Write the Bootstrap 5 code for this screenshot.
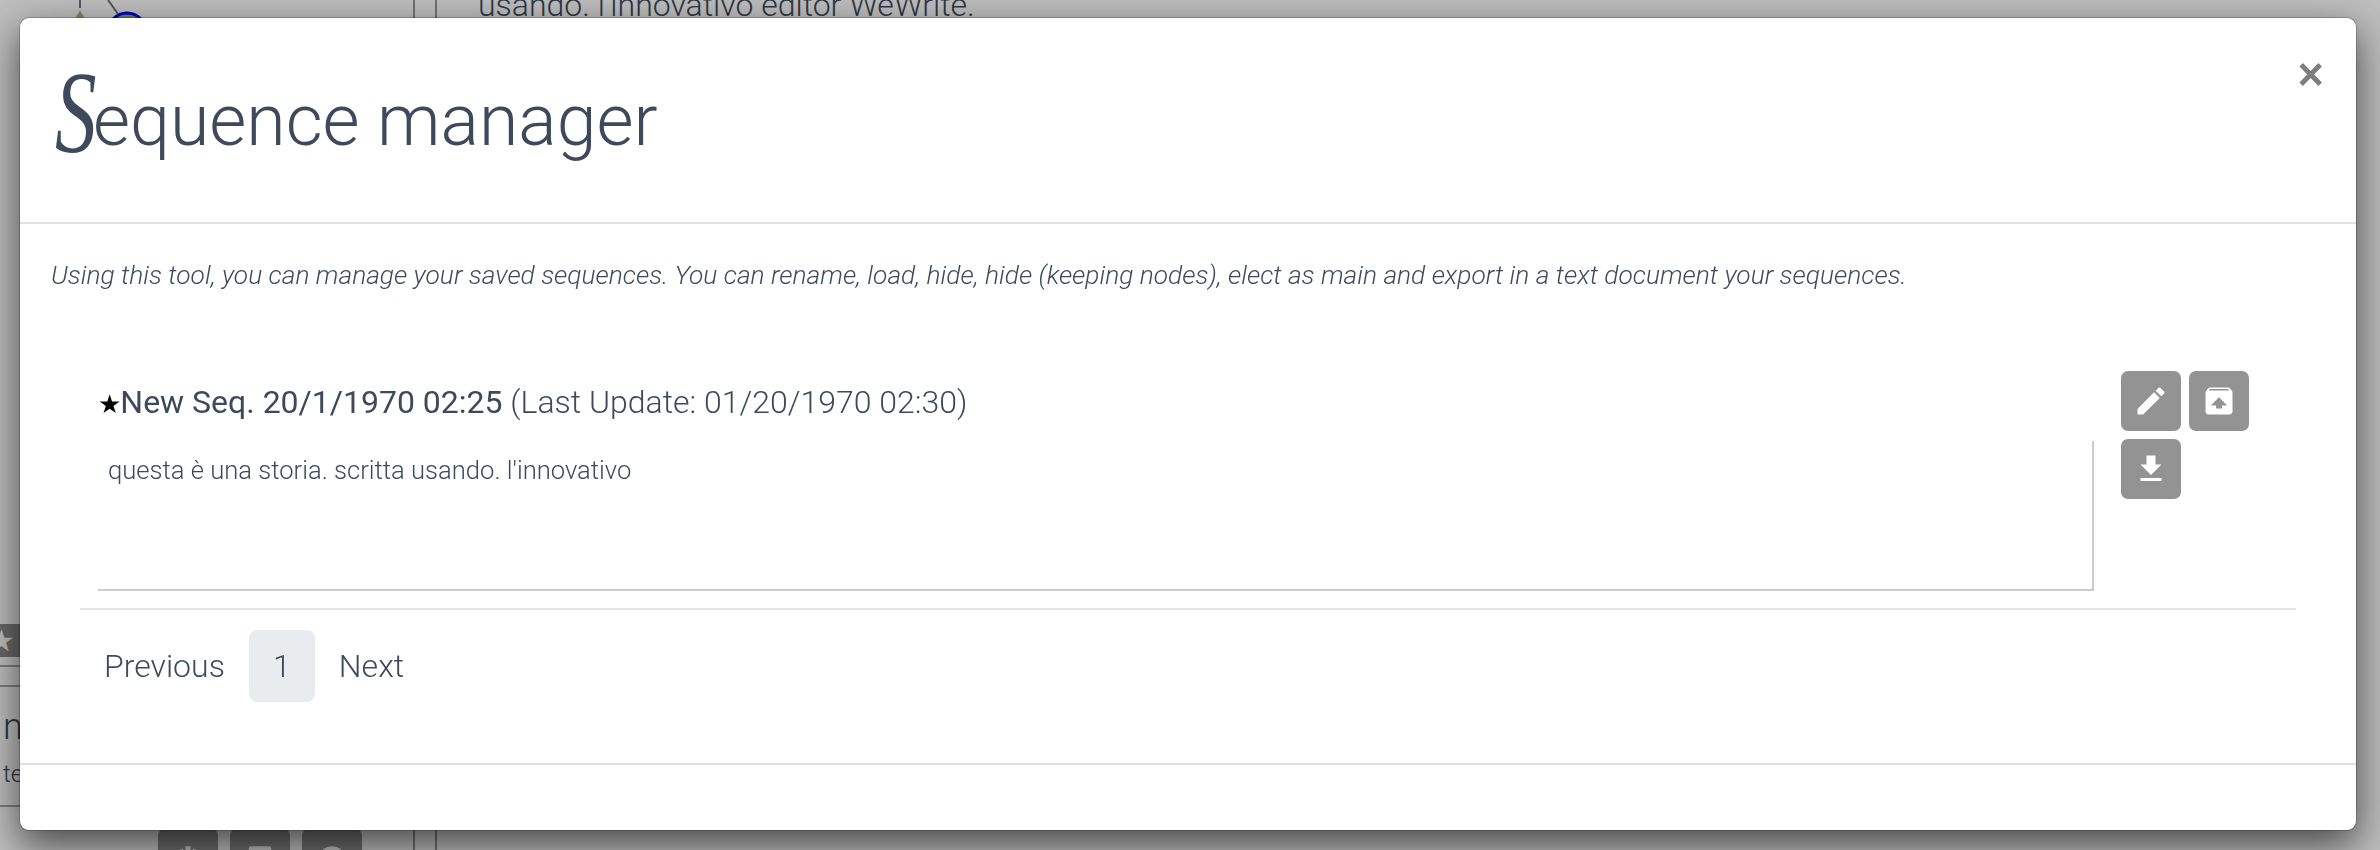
<!DOCTYPE html>
<html lang="en">
<head>
    <meta charset="UTF-8">
    <meta name="viewport" content="width=device-width, initial-scale=1.0">
    <title>Sequence manager</title>
    <link href="https://cdn.jsdelivr.net/npm/bootstrap@5.3.0/dist/css/bootstrap.min.css" rel="stylesheet">
    <style>
        html, body { height: 100%; overflow: hidden; }
        body { font-family: Roboto, "Liberation Sans", sans-serif; font-weight: 300; color: #3e4a5c; background: #fff; }

        /* page behind the modal */
        .back-page { display: grid; grid-template-columns: 415px 22px 1fr; height: 850px; overflow: hidden; }
        .back-side { display: flex; flex-direction: column; border-right: 2px solid #999; }
        .back-gap { border-right: 2px solid #999; }
        .back-nodes { display: block; height: 624px; flex: none; }
        .back-star { width: 20px; height: 33px; background: #8c8c8c; color: #fff; font-size: 30px; line-height: 33px; text-indent: -12px; overflow: hidden; }
        .back-rule { border-bottom: 2px solid #aaa; }
        .back-word { overflow: hidden; white-space: nowrap; padding-left: 3px; }
        .back-btns { display: flex; gap: 12px; padding-left: 158px; height: 60px; flex: none; }
        .back-btn { width: 60px; height: 60px; background: #939393; border-radius: 6px; display: flex; justify-content: center; padding-top: 16px; }
        .back-btn svg { width: 30px; height: 30px; fill: #fff; }
        .back-text { font-size: 32px; line-height: 32px; margin-top: -11px; padding-left: 41px; white-space: nowrap; height: 30px; }

        .modal-backdrop.show { opacity: .26; }
        .seq-dialog { max-width: none; width: 2338px; margin: 17px 0 0 19px; }
        .seq-content { height: 814px; border-radius: 10px; border: 1px solid rgba(0,0,0,.2); box-shadow: 0 14px 38px rgba(0,0,0,.62); }
        .seq-header { height: 206px; padding: 0 32px 0 35px; align-items: flex-start; border-bottom: 2px solid #dee2e6; }
        .seq-title { font-size: 71.6px; line-height: 104px; margin-top: 40px; font-weight: 300; color: #3e4a5c; white-space: nowrap; }
        .seq-cap { font-family: "Liberation Serif", serif; font-style: italic; font-size: 104px; line-height: 1; display: inline-block; margin-right: -14px; transform-origin: left bottom; transform: translateY(9px) scale(.8, 1.12); }
        .seq-close { border: 0; background: none; padding: 0; margin-top: 40px; font-size: 50px; line-height: 32px; font-weight: 500; color: #000; opacity: .5; }

        .seq-body { padding: 0 0 0 31px; }
        .seq-intro { font-size: 26.33px; font-style: italic; line-height: 36px; margin: 0; padding-top: 33px; }
        .seq-item { display: flex; gap: 27px; padding: 114px 0 0 47px; margin-top: -36px; }
        .seq-main { width: 1996px; flex: none; }
        .seq-name { height: 70px; font-size: 32px; line-height: 62px; white-space: nowrap; }
        .seq-name b { font-weight: 400; }
        .seq-fav { color: #000; font-size: 26px; font-family: "DejaVu Sans", sans-serif; font-weight: 400; margin-right: -1px; }
        .seq-preview { height: 150px; padding: 13px 0 0 10px; font-size: 25.6px; line-height: 32px; border-right: 2px solid #ccc; border-bottom: 2px solid #ccc; }
        .seq-tools { width: 128px; display: flex; flex-wrap: wrap; gap: 8px; align-content: flex-start; }
        .seq-tool { width: 60px; height: 60px; padding: 0; border: 0; border-radius: 7px; background: #939393; display: flex; align-items: center; justify-content: center; }
        .seq-tool svg { width: 36px; height: 36px; fill: #fff; }
        .seq-rule { margin: 17px 0 0 29px; width: 2216px; border: 0; border-top: 2px solid #e4e4e4; opacity: 1; }
        .seq-pages { margin: 20px 0 0 28px; }
        .seq-pages .page-link { border: 0; background: none; color: #3e4a5c; font-size: 32px; line-height: 72px; padding: 0 25px; height: 72px; }
        .seq-pages .page-item.active .page-link { background: #e9ecef; color: #3e4a5c; border-radius: 8px; width: 66px; padding: 0; text-align: center; }
        .seq-footer { height: 67px; padding: 0; border-top: 2px solid #dee2e6; flex: none; }
    </style>
</head>
<body>
    <div class="back-page">
        <div class="back-side">
            <svg class="back-nodes" viewBox="0 0 413 624" width="413">
                <path d="M80 0v8M108 0l10 14" stroke="#777" stroke-width="2"/>
                <path d="M80 10l12 22H68z" fill="#b9b27a"/>
                <circle cx="127" cy="32" r="19" fill="#8fa88c" stroke="#00f" stroke-width="3"/>
            </svg>
            <div class="back-star">★</div>
            <div class="back-rule mt-2"></div>
            <div class="back-rule" style="height:20px"></div>
            <div class="back-word" style="font-size:36px;line-height:40px;margin-top:20px;">n</div>
            <div class="back-word" style="font-size:24px;line-height:30px;margin-top:12px;">te</div>
            <div class="back-rule" style="height:18px"></div>
            <div class="back-btns" style="margin-top:22px;">
                <div class="back-btn"><svg viewBox="0 0 24 24"><path d="M10 1h4v6h-4zM5 4l3-1 2 5-3 1zM19 4l-3-1-2 5 3 1z"/></svg></div>
                <div class="back-btn"><svg viewBox="0 0 24 24"><rect x="3" y="1" width="18" height="22" rx="2"/></svg></div>
                <div class="back-btn"><svg viewBox="0 0 24 24"><circle cx="12" cy="12" r="11"/></svg></div>
            </div>
        </div>
        <div class="back-gap"></div>
        <div class="back-text">usando. l'innovativo editor WeWrite.</div>
    </div>
    <div class="modal-backdrop show"></div>

    <div class="modal d-block" tabindex="-1">
        <div class="modal-dialog seq-dialog">
            <div class="modal-content seq-content">
                <div class="modal-header seq-header">
                    <h1 class="modal-title seq-title"><span class="seq-cap">S</span>equence manager</h1>
                    <button type="button" class="seq-close ms-auto" aria-label="Close">×</button>
                </div>
                <div class="modal-body seq-body">
                    <p class="seq-intro">Using this tool, you can manage your saved sequences. You can rename, load, hide, hide (keeping nodes), elect as main and export in a text document your sequences.</p>
                    <div class="seq-item">
                        <div class="seq-main">
                            <div class="seq-name"><span class="seq-fav">★</span><b>New Seq. 20/1/1970 02:25</b> (Last Update: 01/20/1970 02:30)</div>
                            <div class="seq-preview">questa è una storia. scritta usando. l'innovativo</div>
                        </div>
                        <div class="seq-tools">
                            <button class="btn seq-tool" aria-label="Rename"><svg viewBox="0 0 24 24"><path d="M3 17.25V21h3.75L17.81 9.94l-3.75-3.75L3 17.25zM20.71 7.04c.39-.39.39-1.02 0-1.41l-2.34-2.34c-.39-.39-1.02-.39-1.41 0l-1.83 1.83 3.75 3.75 1.83-1.83z"/></svg></button>
                            <button class="btn seq-tool" aria-label="Load"><svg viewBox="0 0 24 24"><path d="M20.55 5.22l-1.39-1.68C18.88 3.21 18.47 3 18 3H6c-.47 0-.88.21-1.15.55L3.46 5.22C3.17 5.57 3 6.01 3 6.5V19c0 1.1.89 2 2 2h14c1.1 0 2-.9 2-2V6.5c0-.49-.17-.93-.45-1.28zM12 9.5l5.5 5.5H14v2h-4v-2H6.5L12 9.5zM5.12 5l.82-1h12l.93 1H5.12z"/></svg></button>
                            <button class="btn seq-tool" aria-label="Export"><svg viewBox="0 0 24 24"><path d="M19 9h-4V3H9v6H5l7 7 7-7zM5 18v2h14v-2H5z"/></svg></button>
                        </div>
                    </div>
                    <hr class="seq-rule">
                    <nav class="seq-pages">
                        <ul class="pagination mb-0">
                            <li class="page-item"><a class="page-link" href="#">Previous</a></li>
                            <li class="page-item active"><a class="page-link" href="#">1</a></li>
                            <li class="page-item"><a class="page-link" href="#">Next</a></li>
                        </ul>
                    </nav>
                </div>
                <div class="modal-footer seq-footer"></div>
            </div>
        </div>
    </div>

    <script src="https://cdn.jsdelivr.net/npm/bootstrap@5.3.0/dist/js/bootstrap.bundle.min.js"></script>
</body>
</html>
